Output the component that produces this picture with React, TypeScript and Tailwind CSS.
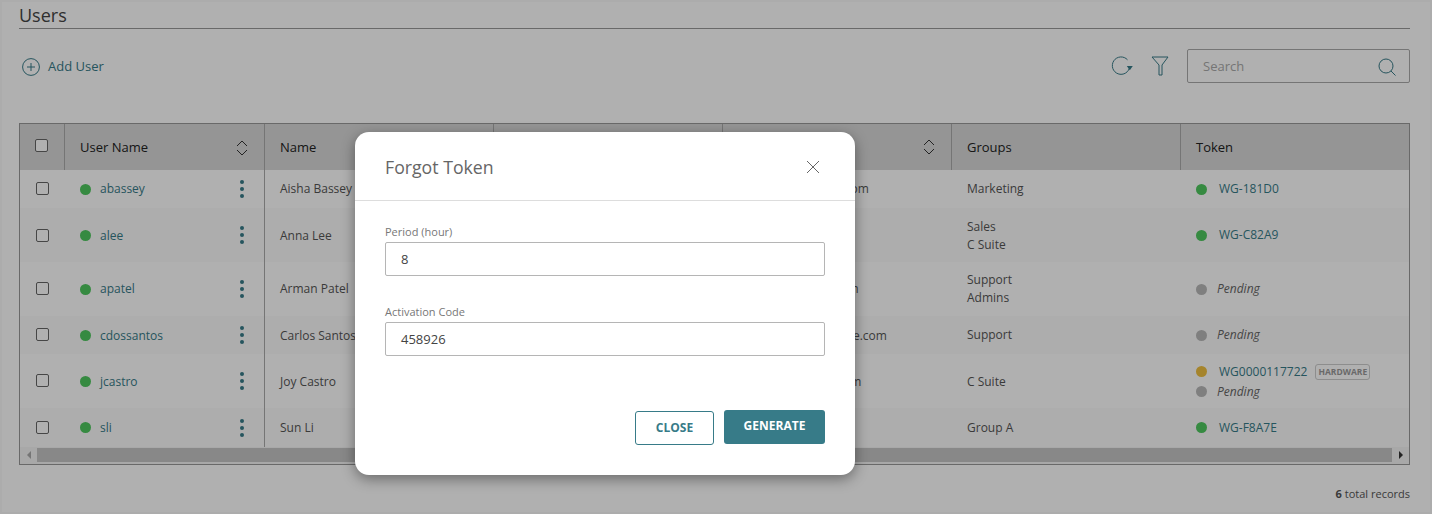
const rows = [
  { user: 'abassey', name: 'Aisha Bassey', email: 'abassey@example.com', groups: ['Marketing'], tokens: [{ dot: 'bg-[#4fc85f]', id: 'WG-181D0' }], h: 'h-[38px]', alt: false, nudge: '' },
  { user: 'alee', name: 'Anna Lee', email: '', groups: ['Sales', 'C Suite'], tokens: [{ dot: 'bg-[#4fc85f]', id: 'WG-C82A9' }], h: 'h-[54px]', alt: true, nudge: 'pt-[1px]' },
  { user: 'apatel', name: 'Arman Patel', email: 'apatel@example.com', groups: ['Support', 'Admins'], tokens: [{ dot: 'bg-[#b9b9b9]' }], h: 'h-[54px]', alt: false, nudge: '' },
  { user: 'cdossantos', name: 'Carlos Santos', email: 'cdossantos@example.com', groups: ['Support'], tokens: [{ dot: 'bg-[#b9b9b9]' }], h: 'h-[38px]', alt: true, nudge: 'pt-[1px]' },
  { user: 'jcastro', name: 'Joy Castro', email: 'jcastro@example.com', groups: ['C Suite'], tokens: [{ dot: 'bg-[#f0c040]', id: 'WG0000117722', hardware: true }, { dot: 'bg-[#b9b9b9]' }], h: 'h-[54px]', alt: false, nudge: 'pt-[1px]' },
  { user: 'sli', name: 'Sun Li', email: '', groups: ['Group A'], tokens: [{ dot: 'bg-[#4fc85f]', id: 'WG-F8A7E' }], h: 'h-[39px]', alt: true, nudge: '' },
];

function SortIcon() {
  return (
    <svg width="12" height="16" viewBox="0 0 12 16" fill="none" stroke="#333" strokeWidth="1">
      <path d="M1 6l5-5 5 5M1 10l5 5 5-5" />
    </svg>
  );
}

function Checkbox() {
  return <span className="block w-[13px] h-[13px] rounded-[2px] border border-[#666] bg-white" />;
}

function Kebab() {
  return (
    <span className="flex flex-col gap-[3px] shrink-0">
      <span className="w-[4px] h-[4px] rounded-full bg-[#377b88]" />
      <span className="w-[4px] h-[4px] rounded-full bg-[#377b88]" />
      <span className="w-[4px] h-[4px] rounded-full bg-[#377b88]" />
    </span>
  );
}

function Field({ label, value }: { label: string; value: string }) {
  return (
    <div>
      <div className="pt-[1px] h-[16px] text-[11px] leading-[16px] text-[#777]">{label}</div>
      <div className="mt-[3px] h-[34px] flex items-center pt-[2px] px-[15px] border border-[#b5b5b5] rounded-[2px] text-[13px] text-[#444]">{value}</div>
    </div>
  );
}

export default function App() {
  return (
    <div className="relative w-[1432px] h-[514px] overflow-hidden bg-white font-['Open_Sans',sans-serif] text-[#333]">
      <div className="pl-[19px] pr-[22px]">
        <div className="h-[29px] border-b border-[#999] text-[18px] leading-[30px] text-[#444]">Users</div>
        <div className="h-[94px] flex items-start justify-between">
          <div className="flex items-center gap-[8px] mt-[28px] ml-[3px] text-[13px] text-[#377b88]">
            <svg width="18" height="18" viewBox="0 0 18 18" fill="none" stroke="#377b88" strokeWidth="1">
              <circle cx="9" cy="9" r="8.400" />
              <path d="M9 5v8M5 9h8" />
            </svg>
            Add User
          </div>
          <div className="flex items-center mt-[20px]">
            <svg width="24" height="22" viewBox="0 0 24 22" fill="none" stroke="#377b88" strokeWidth="1">
              <path d="M16.500 4.800A8.700 8.700 0 1 0 18.700 11.500" />
              <path d="M15.800 11h6l-3 4.200z" fill="#377b88" stroke="none" />
            </svg>
            <svg className="ml-[16px]" width="18" height="20" viewBox="0 0 18 20" fill="none" stroke="#377b88" strokeWidth="1">
              <path d="M1 1h16l-6 8V19H8V9z" />
            </svg>
            <div className="ml-[18px] w-[223px] h-[34px] flex items-center justify-between pt-[1px] pl-[15px] pr-[13px] border border-[#aaa] rounded-[2px] text-[13px] text-[#aaa]">
              Search
              <svg width="18" height="18" viewBox="0 0 18 18" fill="none" stroke="#377b88" strokeWidth="1">
                <circle cx="8" cy="8" r="7" />
                <path d="M13 13l4.500 4.500" />
              </svg>
            </div>
          </div>
        </div>

        <div className="w-[1391px] border border-[#999]">
          <div className="flex h-[46px] bg-[#d8d8d8] text-[13px] text-[#222]">
            <div className="w-[45px] flex items-center justify-center pr-[1px] pb-[3px] border-r border-[#aaa]"><Checkbox /></div>
            <div className="w-[200px] flex items-center justify-between pt-[1px] pl-[15px] pr-[16px] border-r border-[#aaa]">User Name<SortIcon /></div>
            <div className="w-[229px] flex items-center pt-[1px] pl-[15px] border-r border-[#aaa]">Name</div>
            <div className="w-[229px] border-r border-[#aaa]" />
            <div className="w-[229px] flex items-center justify-end pr-[16px] border-r border-[#aaa]"><SortIcon /></div>
            <div className="w-[229px] flex items-center pt-[1px] pl-[15px] border-r border-[#aaa]">Groups</div>
            <div className="flex-1 flex items-center pt-[1px] pl-[15px]">Token</div>
          </div>

          {rows.map(row => (
            <div key={row.user} className={`flex ${row.h} text-[12px] text-[#555] ${row.alt ? 'bg-[#fbfbfb]' : 'bg-white'}`}>
              <div className={`w-[45px] flex items-center justify-center pr-[1px] ${row.user === 'alee' ? '' : 'pb-[1px]'}`}><Checkbox /></div>
              <div className="w-[200px] flex items-center pl-[15px] pr-[20px] border-r border-[#aaa]">
                <span className="w-[11px] h-[11px] shrink-0 rounded-full bg-[#4fc85f]" />
                <span className={`ml-[9px] flex-1 text-[#377b88] ${row.nudge}`}>{row.user}</span>
                <Kebab />
              </div>
              <div className={`w-[229px] flex items-center pl-[15px] ${row.nudge}`}>{row.name}</div>
              <div className="w-[229px]" />
              <div className={`w-[229px] flex items-center pl-[15px] ${row.nudge}`}>{row.email}</div>
              <div className={`w-[229px] flex flex-col justify-center pl-[15px] leading-[18px] ${row.user === 'cdossantos' ? '' : row.nudge}`}>
                {row.groups.map(group => <div key={group}>{group}</div>)}
              </div>
              <div className={`flex-1 flex flex-col justify-center pl-[15px] leading-[20px] ${row.tokens.length > 1 ? 'pt-[1px]' : ''}`}>
                {row.tokens.map((token, i) => (
                  <div key={i} className="flex items-center">
                    <span className={`w-[11px] h-[11px] shrink-0 rounded-full ${token.dot}`} />
                    {token.id ? (
                      <span className="ml-[12px] text-[#377b88]">{token.id}</span>
                    ) : (
                      <span className="ml-[10px] italic text-[#666]">Pending</span>
                    )}
                    {token.hardware && (
                      <span className="ml-[8px] px-[2px] h-[16px] flex items-center border border-[#ccc] rounded-[3px] text-[8.500px] font-bold text-[#999]">HARDWARE</span>
                    )}
                  </div>
                ))}
              </div>
            </div>
          ))}

          <div className="flex items-center h-[17px] pb-[1px] bg-[#f3f3f3]">
            <span className="w-[17px] flex justify-center">
              <span className="border-y-[4px] border-r-[4px] border-y-transparent border-r-[#aaa]" />
            </span>
            <div className="flex-1 h-[14px] bg-[#c6c6c6]" />
            <span className="w-[17px] flex justify-center">
              <span className="border-y-[4px] border-l-[4px] border-y-transparent border-l-[#333]" />
            </span>
          </div>
        </div>

        <div className="w-[1391px] mt-[19px] text-right text-[11px] leading-[20px] text-[#555]"><b className="font-bold">6</b> total records</div>
      </div>

      <div className="absolute inset-0 bg-[rgba(0,0,0,0.31)] border-[2px] border-[rgba(0,0,0,0.02)]" />

      <div className="absolute left-[355px] top-[132px] w-[500px] h-[343px] bg-white rounded-[14px] shadow-[0_4px_14px_rgba(0,0,0,0.4)]">
        <div className="h-[69px] flex items-center justify-between pl-[30px] pr-[35px] border-b border-[#ddd]">
          <span className="pt-[2px] text-[17.700px] text-[#666]">Forgot Token</span>
          <svg width="14" height="14" viewBox="0 0 14 14" fill="none" stroke="#666" strokeWidth="1" className="mt-[1px]">
            <path d="M1 1l12 12M13 1L1 13" />
          </svg>
        </div>
        <div className="px-[30px] pt-[22px] flex flex-col gap-[27px]">
          <Field label="Period (hour)" value="8" />
          <Field label="Activation Code" value="458926" />
        </div>
        <div className="flex justify-end items-start gap-[10px] px-[30px] mt-[54px] text-[12px] font-bold">
          <button className="w-[79px] h-[34px] mt-[1px] border border-[#377b88] rounded-[3px] text-[#377b88]">CLOSE</button>
          <button className="w-[101px] h-[34px] pb-[3px] bg-[#377b88] rounded-[3px] text-white">GENERATE</button>
        </div>
      </div>
    </div>
  );
}
